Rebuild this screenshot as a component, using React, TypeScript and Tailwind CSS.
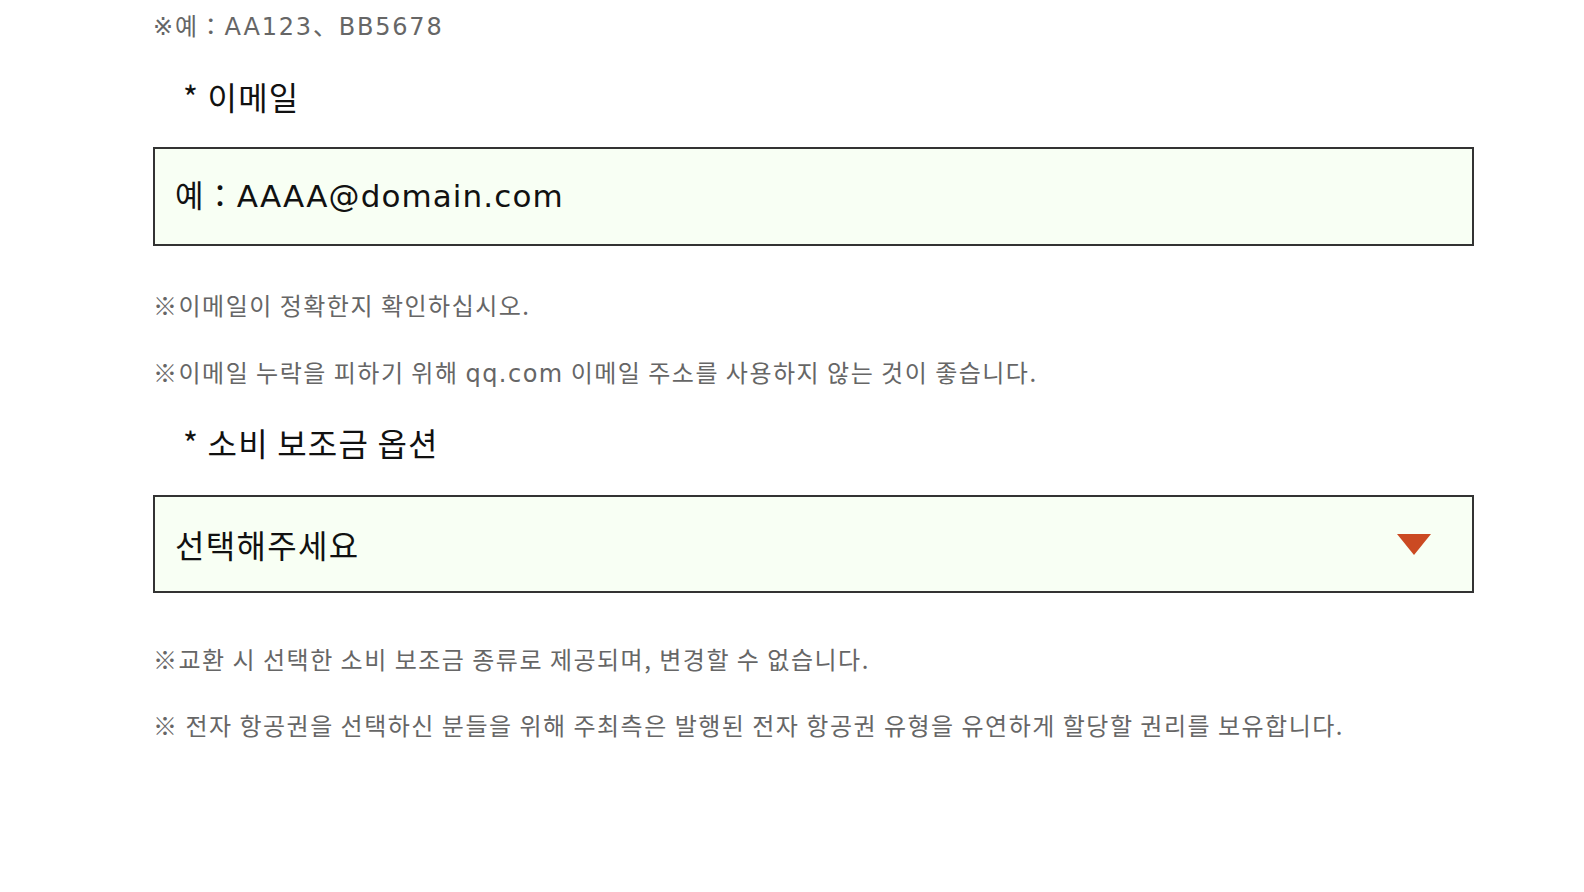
import React from "react";

const font = "font-['DejaVu_Sans','Noto_Sans_CJK_KR',sans-serif]";

function Helper({ children, className = "" }: { children: React.ReactNode; className?: string }) {
  return (
    <div className={`h-[40px] flex items-center text-[24px] tracking-[1.5px] text-[#666] whitespace-nowrap ${className}`}>
      <span>{children}</span>
    </div>
  );
}

function Label({ children, className = "" }: { children: React.ReactNode; className?: string }) {
  return (
    <div className={`h-[44px] flex items-center pl-[30px] text-[32px] tracking-[1.2px] text-[#111] whitespace-nowrap ${className}`}>
      <span>{children}</span>
    </div>
  );
}

export default function App() {
  return (
    <div className={`w-[1584px] h-[892px] bg-white font-['Noto_Sans_CJK_KR',sans-serif]`}>
      <div className="ml-[153px] w-[1321px]">
        <div className={`h-[50px] pt-[4px] flex items-center text-[24px] tracking-[1.8px] text-[#666] whitespace-nowrap ${font}`}>
          <span>※예：AA123、BB5678</span>
        </div>
        <Label className="mt-[24px]">* 이메일</Label>
        <div className="mt-[29px] h-[99px] border-2 border-[#333] bg-[#f8fff4] flex items-center pl-[20px]">
          <input
            className={`w-full bg-transparent outline-none text-[31px] tracking-[1.1px] text-[#111] placeholder:text-[#111] ${font}`}
            placeholder="예：AAAA@domain.com"
          />
        </div>
        <Helper className="mt-[39px]">※이메일이 정확한지 확인하십시오.</Helper>
        <Helper className="mt-[28px]">
          ※이메일 누락을 피하기 위해 <span className={font}>qq.com</span> 이메일 주소를 사용하지 않는 것이 좋습니다.
        </Helper>
        <Label className="mt-[27px]">* 소비 보조금 옵션</Label>
        <div className="mt-[31px] h-[98px] border-2 border-[#333] bg-[#f8fff4] flex items-center justify-between pl-[20px] pr-[41px]">
          <span className="text-[32px] tracking-[1.3px] text-[#111]">선택해주세요</span>
          <svg width="34" height="21" viewBox="0 0 34 21">
            <polygon points="0,0 34,0 17,21" fill="#cb4a22" />
          </svg>
        </div>
        <Helper className="mt-[46px]">※교환 시 선택한 소비 보조금 종류로 제공되며, 변경할 수 없습니다.</Helper>
        <Helper className="mt-[26px]">※ 전자 항공권을 선택하신 분들을 위해 주최측은 발행된 전자 항공권 유형을 유연하게 할당할 권리를 보유합니다.</Helper>
      </div>
    </div>
  );
}
